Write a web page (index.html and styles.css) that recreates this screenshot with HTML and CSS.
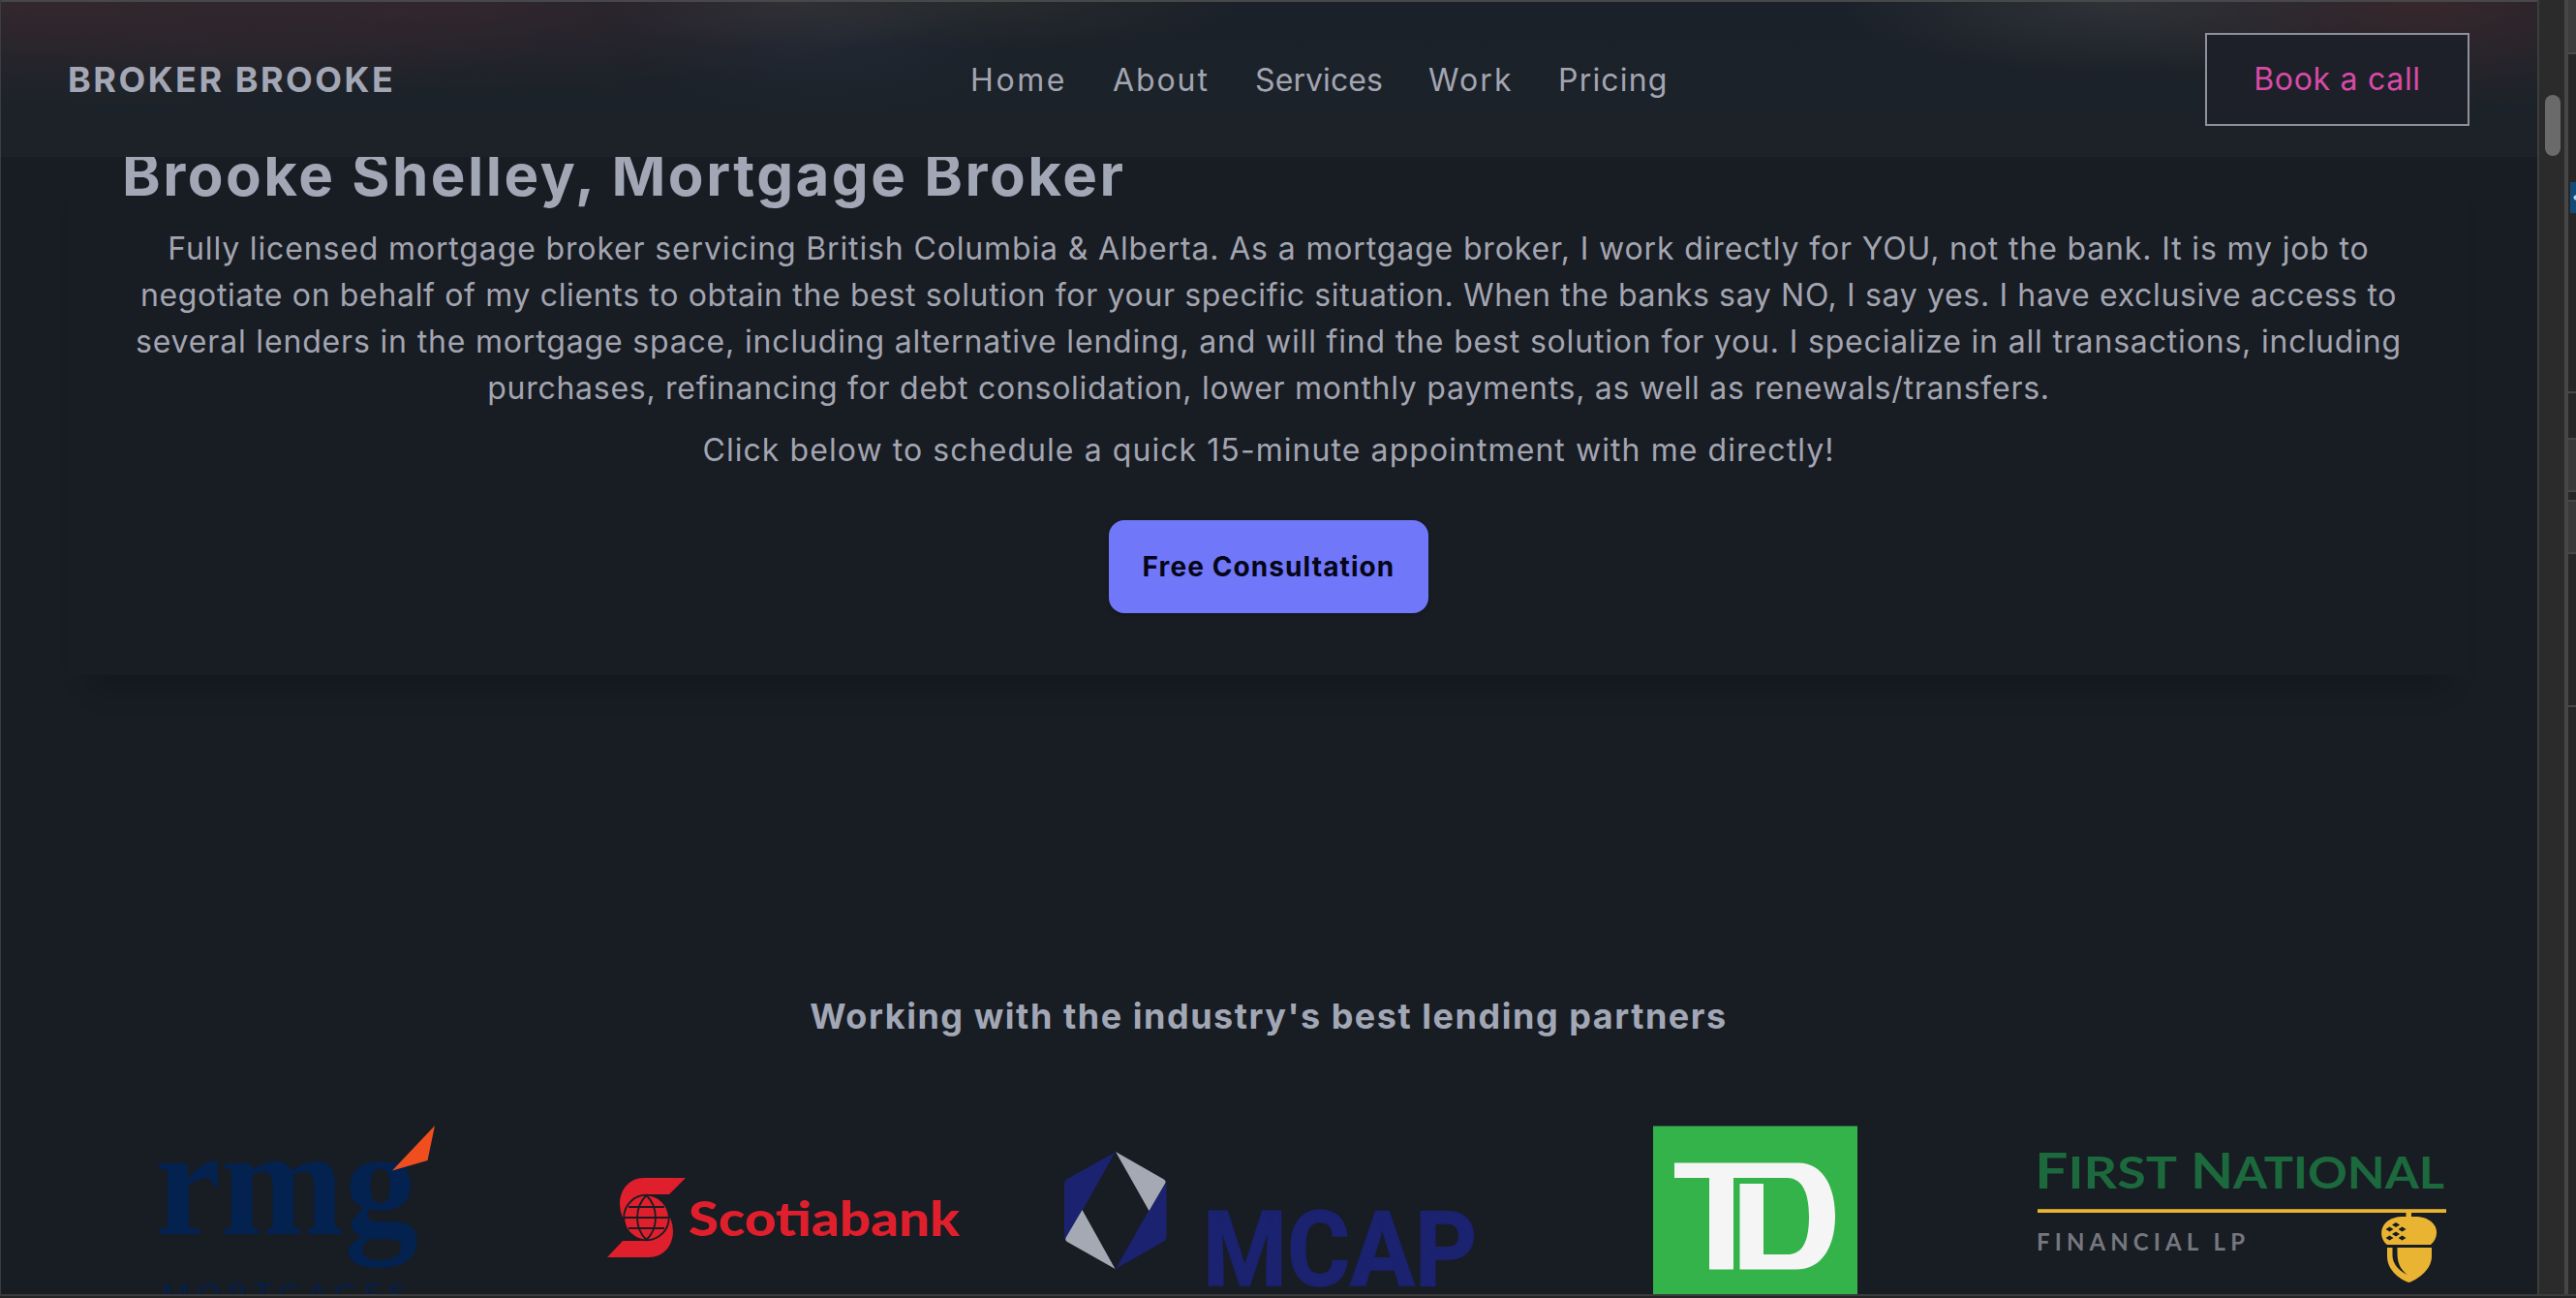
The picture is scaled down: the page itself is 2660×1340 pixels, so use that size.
FILE: index.html
```html
<!DOCTYPE html>
<html lang="en">
<head>
<meta charset="utf-8">
<title>Broker Brooke</title>
<link rel="stylesheet" href="styles.css">
</head>
<body>
<div class="window">
  <div class="page">
    <header class="navbar">
      <a class="brand">BROKER BROOKE</a>
      <nav class="menu">
        <a class="home">Home</a><a class="about">About</a><a class="services">Services</a><a class="work">Work</a><a class="pricing">Pricing</a>
      </nav>
      <a class="book">Book a call</a>
    </header>

    <section class="card">
      <h1>Brooke Shelley, Mortgage Broker</h1>
      <p class="bio">
        <span class="l1">Fully licensed mortgage broker servicing British Columbia &amp; Alberta. As a mortgage broker, I work directly for YOU, not the bank. It is my job to</span>
        <span class="l2">negotiate on behalf of my clients to obtain the best solution for your specific situation. When the banks say NO, I say yes. I have exclusive access to</span>
        <span class="l3">several lenders in the mortgage space, including alternative lending, and will find the best solution for you. I specialize in all transactions, including</span>
        <span class="l4">purchases, refinancing for debt consolidation, lower monthly payments, as well as renewals/transfers.</span>
      </p>
      <p class="prompt">Click below to schedule a quick 15-minute appointment with me directly!</p>
      <button class="cta">Free Consultation</button>
    </section>

    <section class="partners">
      <h2>Working with the industry's best lending partners</h2>
      <div class="logos">
        <svg viewBox="55 1160 502 176" role="img" aria-label="RMG Mortgages">
          <g fill="#04224f" font-family="Liberation Serif, serif" font-weight="700" font-size="159">
            <text x="160" y="1273.500" textLength="272" lengthAdjust="spacingAndGlyphs">rmg</text>
          </g>
          <text x="167" y="1347" fill="#061f47" font-family="Lato, sans-serif" font-size="31" textLength="251">MORTGAGES</text>
          <path fill="#f04e1e" d="M405 1208.500L449 1162 441.500 1198Z"/>
        </svg>
        <svg viewBox="557 1160 502 176" role="img" aria-label="Scotiabank">
          <g fill="#e01f2d">
            <path d="M708 1216H665C650 1216 640 1228 640 1243Q640 1250 643 1257L668 1257V1233H691Z"/>
            <path d="M627 1298H670C685 1298 695 1286 695 1271Q695 1264 692 1257L668 1257V1281H643Z"/>
            <circle cx="667.500" cy="1257" r="23.300" stroke="#181c23" stroke-width="1.800"/>
          </g>
          <g fill="none" stroke="#181c23" stroke-width="1.800">
            <path d="M649 1246H686M644 1257H691M649 1268H686M667.500 1234C655 1246 655 1268 667.500 1280M667.500 1234C680 1246 680 1268 667.500 1280"/>
          </g>
          <text x="711" y="1276" fill="#e01f2d" font-family="Lato, sans-serif" font-weight="900" font-size="49" textLength="280" lengthAdjust="spacingAndGlyphs">Scotiabank</text>
        </svg>
        <svg viewBox="1059 1160 502 176" role="img" aria-label="MCAP">
          <path fill="#1b2270" d="M1151.500 1189.500L1118 1249 1100 1279Q1099 1278 1099 1275V1222Q1099 1219 1102 1217ZM1204.500 1221V1276Q1204.500 1280 1201 1282L1152 1310 1186 1250Z"/>
          <path fill="#a4a9b3" d="M1152 1189L1201 1217Q1205 1219 1203 1222L1186.500 1250ZM1117.500 1249L1151.500 1310 1102 1282Q1099 1280 1101 1277Z"/>
          <text x="1242" y="1326.500" fill="#1b2270" stroke="#1b2270" stroke-width="1.500" font-family="Roboto, sans-serif" font-weight="700" font-size="108" textLength="283" lengthAdjust="spacingAndGlyphs">MCAP</text>
        </svg>
        <svg viewBox="1561 1160 502 176" role="img" aria-label="TD">
          <rect x="1707" y="1162.500" width="211" height="180" fill="#33b34a"/>
          <path fill="#f5f5f5" d="M1729 1200.500H1857C1884 1200.500 1895 1228 1895 1255C1895 1286 1882 1310.500 1855 1310.500H1796.500V1222H1821V1295H1846C1862 1295 1868 1280 1868 1256C1868 1235 1863 1216 1845 1216H1790V1310.500H1765V1216H1729Z"/>
        </svg>
        <svg viewBox="2063 1160 502 176" role="img" aria-label="First National Financial LP">
          <g fill="#1b693c" font-family="Lato, sans-serif" font-weight="700" font-size="45">
            <text x="2101" y="1227" textLength="147" lengthAdjust="spacingAndGlyphs"><tspan font-size="51">F</tspan>IRST</text>
            <text x="2262" y="1227" textLength="262" lengthAdjust="spacingAndGlyphs"><tspan font-size="51">N</tspan>ATIONAL</text>
          </g>
          <text x="2103" y="1291" fill="#75777f" font-family="Lato, sans-serif" font-weight="700" font-size="24" textLength="215">FINANCIAL LP</text>
          <g fill="#e9b432">
            <rect x="2104" y="1248.200" width="422" height="3.800"/>
            <rect x="2484.500" y="1251" width="5.500" height="7"/>
            <path d="M2465 1285C2455 1278 2456 1256 2482 1256H2493C2518 1256 2521 1276 2510 1285Z"/>
            <path d="M2465 1288H2511V1297C2511 1310 2498 1320 2487.500 1324C2476 1320 2465 1310 2465 1297Z"/>
          </g>
          <path fill="#181c23" d="M2470.500 1288H2475.500V1294C2475.500 1304 2479 1311 2486 1316C2475 1311 2470.500 1303 2470.500 1296Z"/>
          <path fill="#181c23" d="M2474 1262l4 2.500-4 2.500-4-2.500zM2467.500 1266.500l4 2.500-4 2.500-4-2.500zM2480.500 1266.500l4 2.500-4 2.500-4-2.500zM2474 1271.500l4 2.500-4 2.500-4-2.500zM2467.500 1275.500l4 2.500-4 2.500-4-2.500zM2480.500 1275.500l4 2.500-4 2.500-4-2.500z"/>
        </svg>
      </div>
    </section>
  </div>
  <div class="scrollbar"><div class="thumb"></div></div>
  <div class="neighbour">
    <div class="tab"></div>
    <div class="badge"></div>
    <div class="rule"></div>
    <div class="field first"></div>
    <div class="field"></div>
    <div class="rule last"></div>
  </div>
</div>
</body>
</html>
```
FILE: styles.css
```css
* { box-sizing: border-box; }
body {
  margin: 0;
  width: 2660px;
  height: 1340px;
  overflow: hidden;
  background: #252526;
  color: #a3a5b1;
  font-family: Inter, "Noto Sans", sans-serif;
}
.window { display: flex; height: 1338px; border-bottom: 2px solid #3b3b3c; }
.page {
  position: relative;
  width: 2620px;
  height: 1336px;
  overflow: hidden;
  display: flex;
  flex-direction: column;
  align-items: center;
  padding: 144px 1px 0 0;
  background: #181c23;
  border-left: 1px solid #3a3d43;
}

/* navigation bar, stuck over the scrolled page */
.navbar {
  position: absolute;
  top: 0;
  left: 0;
  right: 0;
  height: 162px;
  z-index: 1;
  display: grid;
  grid-template-columns: 932px 1fr auto;
  align-items: center;
  padding: 2px 70px 2px 69px;
  border-top: 2px solid #474849;
  background:
    radial-gradient(ellipse 520px 95px at 460px 0, rgba(58, 40, 47, .7), transparent),
    radial-gradient(ellipse 620px 110px at 0 0, rgba(58, 42, 46, .75), transparent),
    radial-gradient(ellipse 200px 50px at 810px 0, rgba(50, 54, 57, .7), transparent),
    radial-gradient(ellipse 260px 50px at 1020px 0, rgba(46, 46, 46, .7), transparent),
    radial-gradient(ellipse 200px 80px at 850px 35px, rgba(35, 43, 56, .7), transparent),
    radial-gradient(ellipse 280px 75px at 2180px 0, rgba(52, 54, 58, .8), transparent),
    radial-gradient(ellipse 340px 110px at 2500px 0, rgba(62, 41, 45, .8), transparent),
    linear-gradient(#1b212a, #1c2229 60%, #1c2228);
}
.brand { font-size: 36px; font-weight: 700; letter-spacing: 2.5px; color: #a3a7b5; }
.menu { display: grid; grid-template-columns: 147px 147px 179px 134px auto; justify-content: start; font-size: 32px; }
.home { letter-spacing: 2.6px; }
.about { letter-spacing: 1.9px; }
.services { letter-spacing: .1px; }
.work { letter-spacing: 2.1px; }
.pricing { letter-spacing: 1.2px; }
.book {
  width: 273px;
  height: 96px;
  border: 2px solid #8e909c;
  background: #1e2029;
  color: #d94aa8;
  font-size: 32px;
  letter-spacing: .7px;
  line-height: 92px;
  text-align: center;
}

/* introduction */
.card {
  width: 2480px;
  height: 553px;
  padding: 0 56px;
  display: flex;
  flex-direction: column;
  align-items: center;
  box-shadow: 0 36px 30px -24px rgba(0, 0, 0, .16);
}
h1, h2, p { margin: 0; }
h1 { align-self: flex-start; font-size: 60px; line-height: 72px; letter-spacing: 2.5px; color: #a2a7b6; white-space: nowrap; }
.bio { margin-top: 17px; display: flex; flex-direction: column; align-items: center; }
.bio, .prompt { font-size: 32px; line-height: 48px; white-space: nowrap; }
.l1 { letter-spacing: .856px; }
.l2 { letter-spacing: .655px; }
.l3 { letter-spacing: .828px; }
.l4 { letter-spacing: .73px; }
.prompt { margin-top: 16px; letter-spacing: 1.07px; }
.cta {
  width: 330px;
  height: 96px;
  margin-top: 48px;
  padding: 0;
  border: 0;
  border-radius: 16px;
  background: #7077f9;
  color: #050618;
  font: 700 28px/96px Inter, sans-serif;
  letter-spacing: 1.1px;
  box-shadow: 0 2px 4px rgba(0, 0, 0, .2);
}

/* lending partners */
.partners { display: flex; flex-direction: column; align-items: center; margin-top: 330px; }
h2 { font-size: 36px; line-height: 44px; letter-spacing: 1.53px; color: #a2a7b6; }
.logos { display: grid; grid-template-columns: repeat(5, 502px); margin-top: 89px; }
.logos svg { display: block; width: 502px; height: 176px; }

/* browser scrollbar and the strip of the next panel */
.scrollbar { width: 28px; padding: 98px 0 0 6px; background: #2b2b2b; border-left: 2px solid #3d3d3d; }
.thumb { width: 16px; height: 63px; border-radius: 8px; background: #6a6a6a; }
.neighbour { width: 12px; border-left: 4px solid #464646; background: #262626; }
.tab { height: 56px; background: #3c3c3c; border-bottom: 2px solid #4a4a4a; }
.badge { height: 32px; margin: 132px 0 0 2px; background: radial-gradient(circle at 6px 16px, #bcd4e6 2px, #134b78 3px); }
.rule { height: 2px; margin-top: 184px; background: #464646; }
.field { height: 56px; margin-top: 8px; background: #393939; border: solid #464646; border-width: 2px 0; }
.field.first { margin-top: 46px; }
.rule.last { margin-top: 156px; }
```
